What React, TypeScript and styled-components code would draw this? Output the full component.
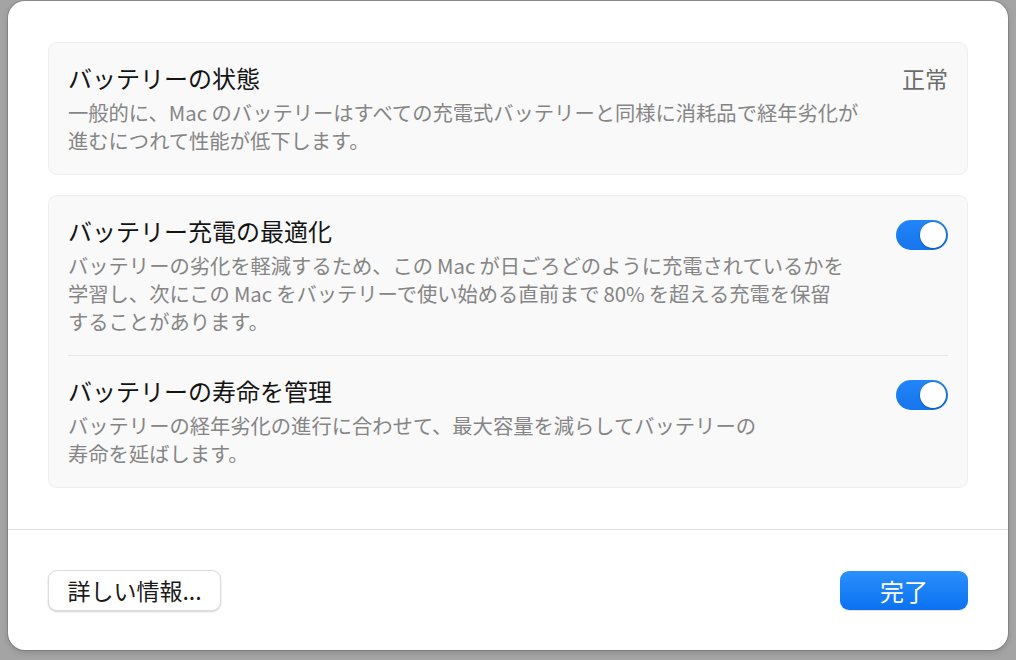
import React from 'react';
import styled, { createGlobalStyle } from 'styled-components';

const GlobalStyle = createGlobalStyle`
    html, body {
        margin: 0;
        padding: 0;
        background: #a4a4a4;
    }
    body {
        font-family: "Noto Sans CJK JP", "Noto Sans", sans-serif;
        -webkit-font-smoothing: antialiased;
    }
`;

type Setting = {
    title: string;
    lines: string[];
    on: boolean;
};

// thin spaces around "Mac" mimic the automatic kana/latin spacing of the original
const settings: Setting[] = [
    {
        title: 'バッテリー充電の最適化',
        lines: [
            'バッテリーの劣化を軽減するため、この\u2009Mac\u2009が日ごろどのように充電されているかを',
            '学習し、次にこの\u2009Mac\u2009をバッテリーで使い始める直前まで\u200980%\u2009を超える充電を保留',
            'することがあります。',
        ],
        on: true,
    },
    {
        title: 'バッテリーの寿命を管理',
        lines: [
            'バッテリーの経年劣化の進行に合わせて、最大容量を減らしてバッテリーの',
            '寿命を延ばします。',
        ],
        on: true,
    },
];

function Toggle({ on }: { on: boolean }) {
    return (
        <Track $on={on}>
            <Knob />
        </Track>
    );
}

function App() {
    return (
        <Page>
            <GlobalStyle />
            <Dialog>
                <Body>
                    <Card>
                        <Row>
                            <TextBlock>
                                <Title>バッテリーの状態</Title>
                                <Desc>
                                    一般的に、Mac のバッテリーはすべての充電式バッテリーと同様に消耗品で経年劣化が
                                    <br />
                                    進むにつれて性能が低下します。
                                </Desc>
                            </TextBlock>
                            <Status>正常</Status>
                        </Row>
                    </Card>
                    <Card>
                        {settings.map((s, i) => (
                            <React.Fragment key={s.title}>
                                {i > 0 && <Divider />}
                                <Row>
                                    <TextBlock>
                                        <Title>{s.title}</Title>
                                        <Desc>
                                            {s.lines.map((l, j) => (
                                                <React.Fragment key={j}>
                                                    {j > 0 && <br />}
                                                    {l}
                                                </React.Fragment>
                                            ))}
                                        </Desc>
                                    </TextBlock>
                                    <Toggle on={s.on} />
                                </Row>
                            </React.Fragment>
                        ))}
                    </Card>
                </Body>
                <Footer>
                    <SecondaryButton>詳しい情報...</SecondaryButton>
                    <PrimaryButton>完了</PrimaryButton>
                </Footer>
            </Dialog>
        </Page>
    );
}

export default App;

const Page = styled.div`
    width: 1016px;
    height: 660px;
    box-sizing: border-box;
    padding: 1px 8px 0 8px;
    overflow: hidden;
`;

const Dialog = styled.div`
    width: 1000px;
    height: 649px;
    box-sizing: border-box;
    background: #ffffff;
    border-radius: 17px;
    box-shadow: 0 0 0 1px rgba(0, 0, 0, 0.12), 0 2px 6px rgba(0, 0, 0, 0.18);
    display: flex;
    flex-direction: column;
    overflow: hidden;
`;

const Body = styled.div`
    padding: 41px 40px 41px 40px;
    display: flex;
    flex-direction: column;
    gap: 20px;
    border-bottom: 1px solid #e2e2e2;
`;

const Card = styled.div`
    background: #f9f9f9;
    border: 1px solid #eeeeee;
    border-radius: 9px;
    display: flex;
    flex-direction: column;
`;

const Row = styled.div`
    display: flex;
    align-items: flex-start;
    justify-content: space-between;
    padding: 19px 19px 20px 19px;
`;

const TextBlock = styled.div`
    display: flex;
    flex-direction: column;
    gap: 4px;
`;

const Title = styled.div`
    font-size: 24px;
    line-height: 32px;
    font-weight: 400;
    color: #141414;
`;

const Desc = styled.div`
    font-size: 20.3px;
    line-height: 28px;
    color: #858585;
    white-space: nowrap;
`;

const Status = styled.div`
    font-size: 23px;
    line-height: 32px;
    color: #6c6c6c;
`;

const Divider = styled.div`
    height: 1px;
    background: #e8e8e8;
    margin: 0 19px;
`;

const Track = styled.div<{ $on: boolean }>`
    flex: none;
    width: 52px;
    height: 30px;
    margin-top: 5px;
    border-radius: 15px;
    box-sizing: border-box;
    padding: 2px;
    background: ${(p) => (p.$on ? 'linear-gradient(#2285f8, #1575ec)' : '#e0e0e0')};
    display: flex;
    justify-content: ${(p) => (p.$on ? 'flex-end' : 'flex-start')};
`;

const Knob = styled.div`
    width: 26px;
    height: 26px;
    border-radius: 50%;
    background: #ffffff;
    box-shadow: 0 0 0 0.5px rgba(0, 0, 0, 0.15), 0 1px 2px rgba(0, 0, 0, 0.2);
`;

const Footer = styled.div`
    flex: 1;
    display: flex;
    align-items: center;
    justify-content: space-between;
    padding: 0 40px 0 40px;
`;

const BaseButton = styled.button`
    font-family: "Noto Sans CJK JP", "Noto Sans", sans-serif;
    font-size: 23px;
    border-radius: 9px;
    padding: 0 16px;
    box-sizing: border-box;
    display: flex;
    align-items: center;
    justify-content: center;
`;

const SecondaryButton = styled(BaseButton)`
    width: 173px;
    height: 41px;
    background: #ffffff;
    color: #1a1a1a;
    border: 1px solid #dcdcdc;
    box-shadow: 0 1px 2px rgba(0, 0, 0, 0.18);
`;

const PrimaryButton = styled(BaseButton)`
    width: 128px;
    height: 39px;
    font-size: 24px;
    background: linear-gradient(#2a90fb, #0b71f2);
    color: #ffffff;
    border: none;
    box-shadow: 0 1px 1px rgba(0, 0, 0, 0.12);
`;
